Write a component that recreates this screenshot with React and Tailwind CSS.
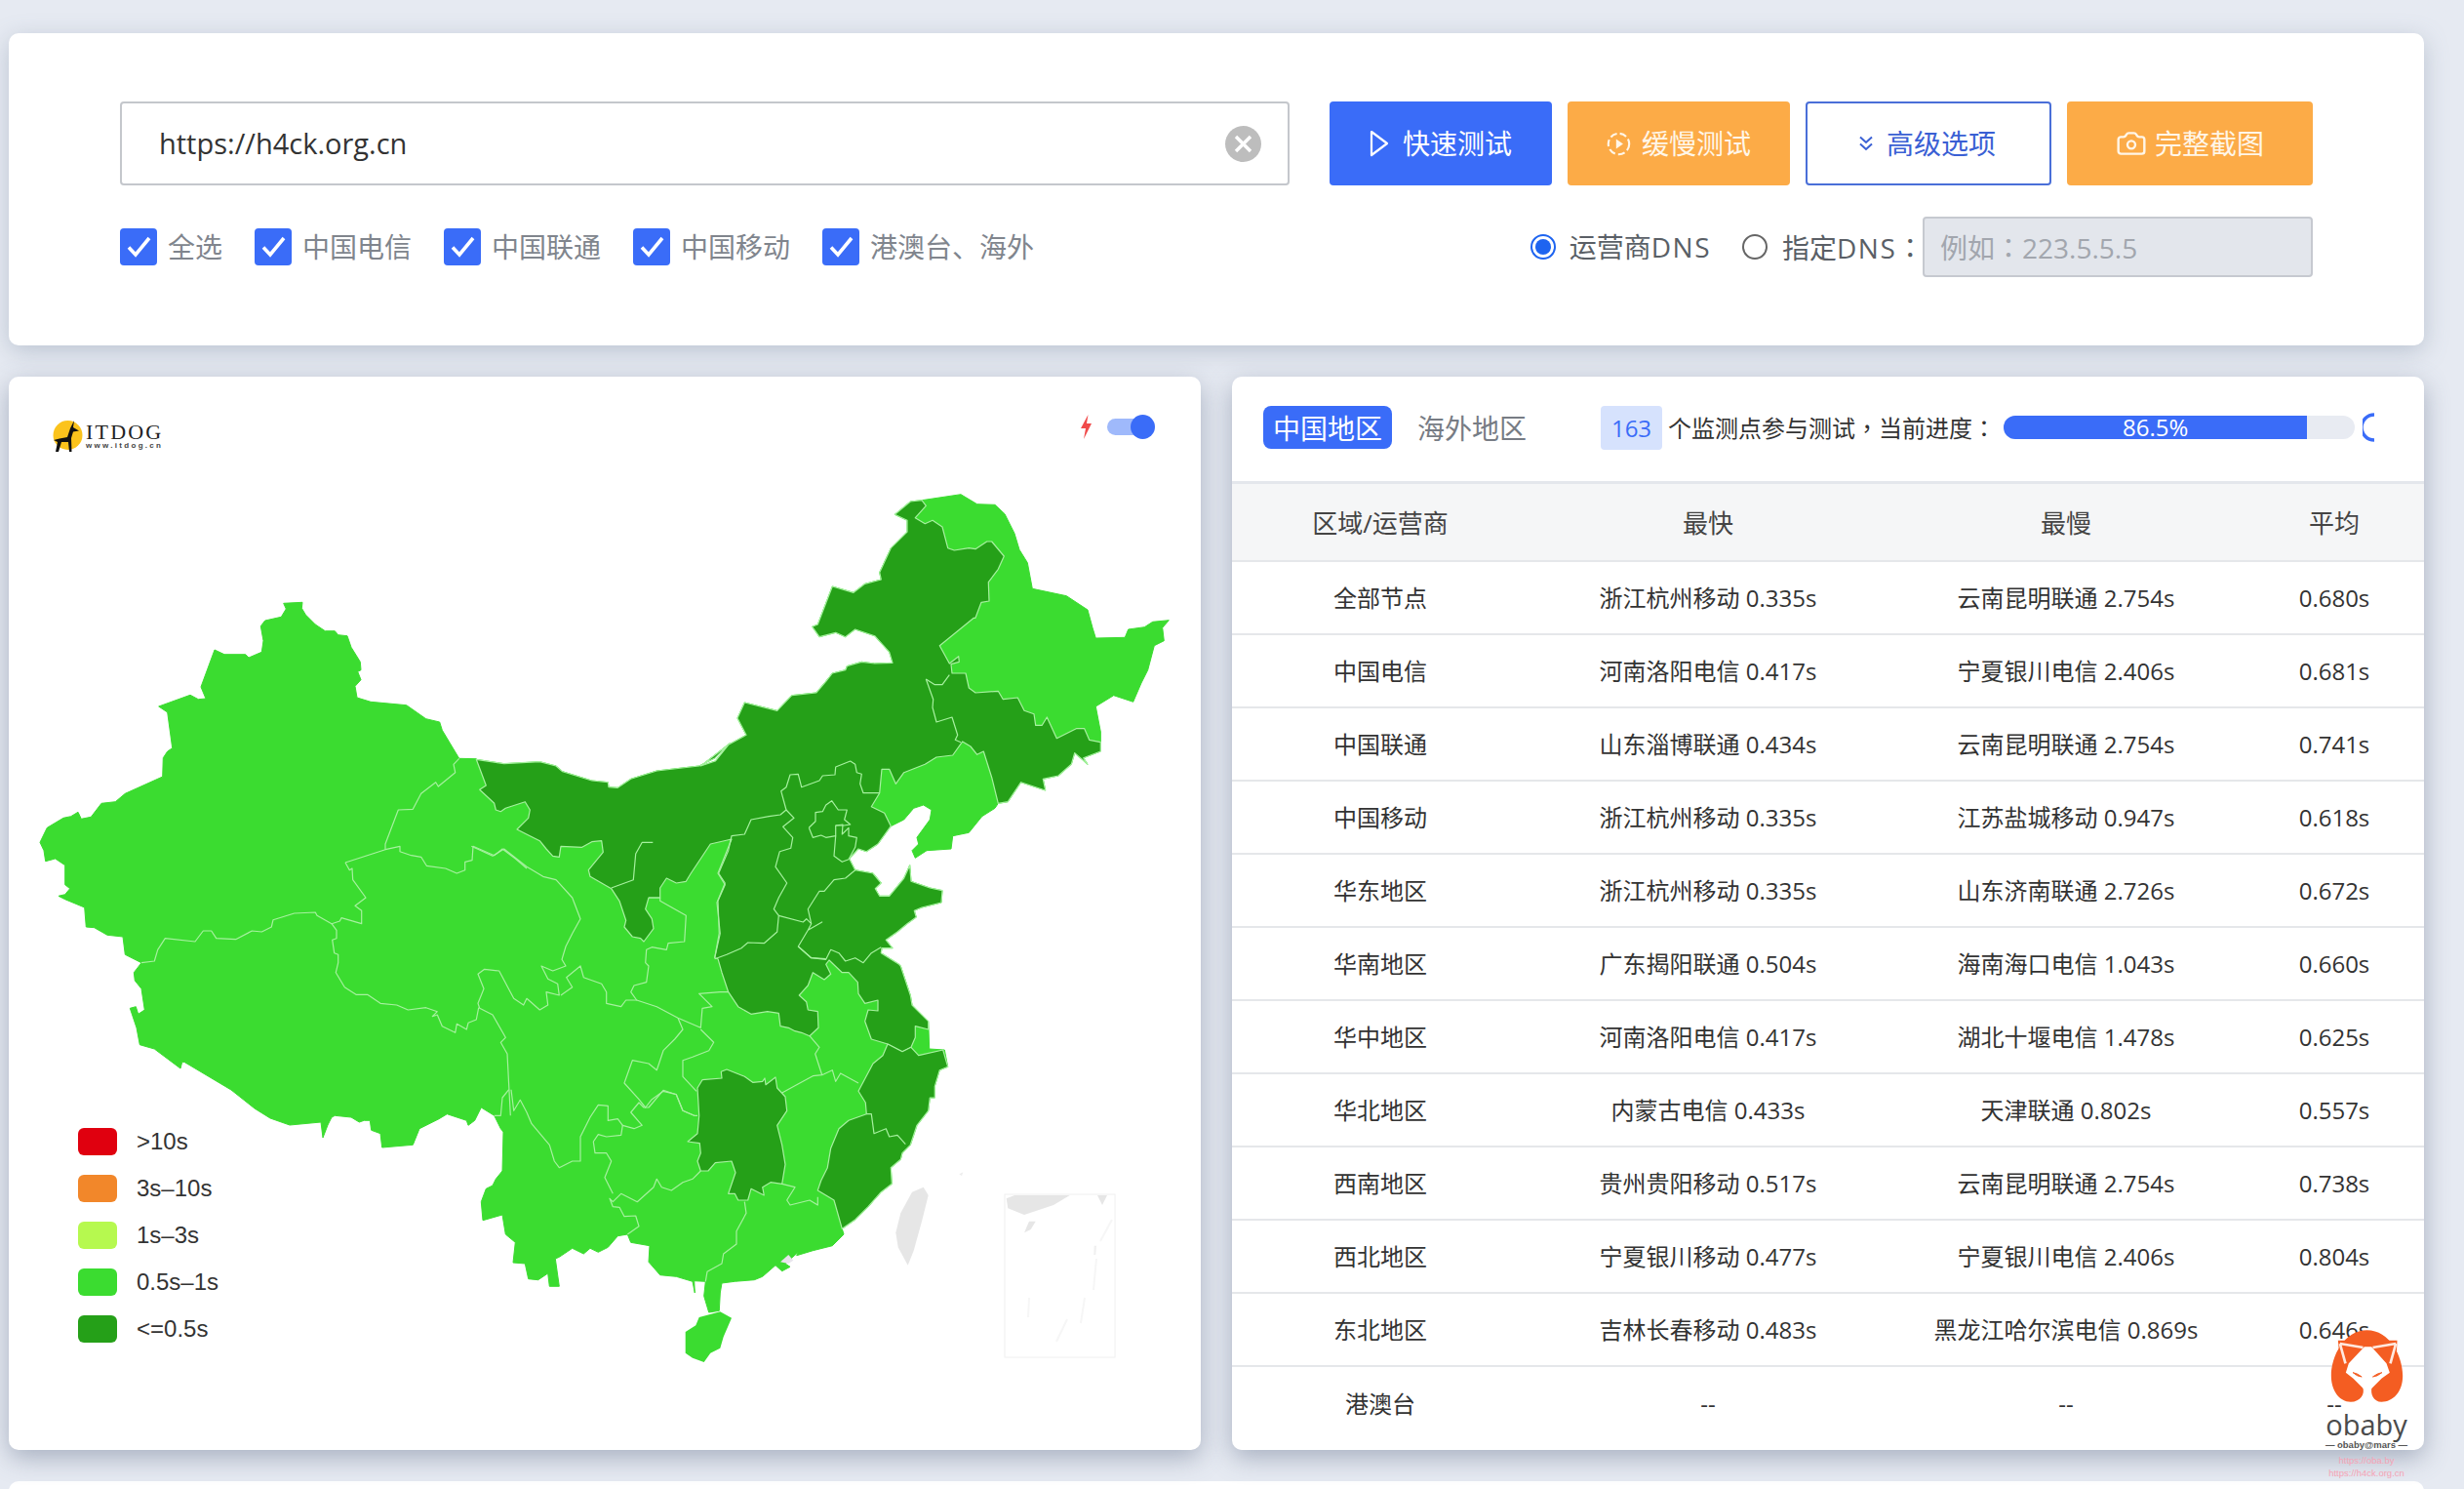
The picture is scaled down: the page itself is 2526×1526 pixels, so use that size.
import React from "react";
import { Camera } from "lucide-react";

const seg = (ox, oy, s) =>
  s.trim().split(/\s+/).map((t) => {
    const [x, y] = t.split(",").map(Number);
    return [ox + x / 3, oy + y / 3];
  });
const A = (s) => seg(30, 600, s);
const B = (s) => seg(340, 760, s);
const C = (s) => seg(700, 490, s);
const D = (s) => seg(650, 780, s);
const E = (s) => seg(480, 1000, s);
const R = (s) => seg(0, 0, s).map(([x, y]) => [x * 3, y * 3]);
const poly = (...segs) => segs.flat().map(([x, y]) => `${x.toFixed(1)},${y.toFixed(1)}`).join(" ");

const northIM = B("445,55 530,68 640,62 690,75 710,92 800,120 850,125 852,140 880,142 920,115 1000,90 1130,75 1180,50 1225,5");
const northNE = C("55,885 100,870 140,820 195,790 168,738 190,690 290,715 335,668 410,660 440,625 460,600 500,590 505,578 550,565 590,570 645,568 635,535 590,485 530,465 500,488 470,475 420,488 398,457 415,450 460,333 525,352 560,325 610,312 605,290 640,215 690,165 690,130 652,112 700,72 735,68");
const ljCoast = C("1285,840 1232,860 1245,880 1205,845 1195,880 1155,915 1108,925 1115,960 1040,935 1000,995 970,1000");
const bohai = C("640,1070 600,1125 565,1148 540,1140 512,1170 530,1205 585,1215 610,1245 592,1262 605,1285 635,1285 680,1230 698,1190 702,1240 760,1260 798,1268 795,1305 735,1320 712,1330 718,1350 690,1370 660,1395 625,1420 645,1445 612,1445 610,1460 665,1495");

const silhouette = poly(
  A("33,790 55,745 105,715 128,710 150,697 160,718 190,712 222,670 265,665 295,640 410,588 412,530 425,510 440,500 425,390 398,372 495,337 520,350 543,348 528,312 570,198 600,212 665,212 675,222 715,205 720,170 712,125 725,108 775,97 790,72 782,55 840,52 838,70 850,90 880,120 910,140 940,140 950,152 978,155 990,190 1018,235 1020,260 1010,265 1020,290 1002,310 1008,345 1050,358 1160,368 1220,410 1262,420 1270,445 1300,495 1322,532 1375,533"),
  northIM,
  northNE,
  C("855,50 905,80 960,82 990,110 1020,170 1035,220 1060,260 1075,340 1180,362 1245,405 1260,460 1270,492 1360,490 1370,465 1420,458 1445,442 1495,437 1475,460 1480,500 1450,515 1430,590 1410,630 1385,688 1325,668 1270,702 1285,780"),
  ljCoast,
  C("960,1015 920,1040 880,1090 830,1100 825,1140 750,1145 715,1168 705,1145 725,1125 720,1105 760,1050 765,1020 740,1005 710,1015 680,1050"),
  bohai,
  D("820,630 850,720 855,750 905,800 908,885 955,888 965,940 940,950 925,1000 925,1035 910,1035 905,1075 870,1120 860,1150 850,1180 825,1205 820,1225 790,1250 793,1300 760,1325 720,1370 680,1410 640,1438 645,1455 610,1490 550,1505 500,1520"),
  E("1015,850 975,885 990,895 965,908 945,890 905,925 880,935 820,940 780,945 775,975 772,1030 740,1035 725,985 730,940 695,938 697,975 690,940 640,925 590,920 555,880 558,830 500,820 490,795 460,800 430,835 400,850 375,838 355,855 320,838 280,865 268,870 280,955 250,955 245,915 215,935 185,932 175,885 138,882 145,820 115,795 105,735 45,752 40,695 55,655 75,645 85,625 105,600 108,480 100,470 80,430 40,405 20,445 0,460"),
  B("415,1165 355,1145 330,1160 270,1190 250,1240 155,1248 150,1205 122,1195 118,1165 100,1165 85,1170 60,1155 10,1150 0,1155"),
  R("336,1153 331,1166 329,1150 297,1153 277,1146 261,1136 237,1117 190,1089"),
  A("520,1470 470,1465 465,1485 385,1425 340,1412 330,1360 310,1300 328,1295 335,1318 355,1305 345,1240 325,1215 322,1190 345,1160 295,1135 288,1080 240,1075 200,1052 175,1050 170,990 110,965 90,955 110,950 125,932 110,920 110,860 80,840 50,848 45,815")
);

const hainan = poly(E("710,1050 775,1033 810,1052 785,1110 775,1145 745,1160 725,1188 690,1175 668,1160 668,1095 700,1075"));

const darkNorth = poly(
  northIM,
  northNE,
  C("748,85 715,122 745,140 768,130 798,150 815,215 835,222 880,215 900,218 935,195 950,195 988,240 970,280 940,320 942,378 918,382 900,430 895,430 790,515 820,570 848,548 850,565 825,572 828,600 870,600 880,645 900,660 970,655 985,680 1030,675 1050,715 1080,725 1085,760 1105,760 1120,735 1150,800 1210,770 1235,770 1250,805 1285,812"),
  ljCoast,
  C("950,920 925,840 905,850 885,825 860,810 830,852 780,858 745,880 680,905 655,940 635,895 612,895 605,968 580,1010 620,1030"),
  bohai,
  D("820,630 850,720 855,750 905,800 905,825 865,815 865,850 852,880 825,893 780,870 730,855 710,800 720,765 750,768 750,735 710,745 690,715 688,680 660,650 640,650 600,612 590,625 605,655 585,672 550,650 535,690 508,720 530,740 535,765 565,770 567,820 540,845 515,835 495,830 475,820 450,815 445,775 410,770 360,778 320,755 290,710 270,650 258,608 248,605 262,530 258,430 280,380 258,345 300,240"),
  B("1165,315 1105,405 1090,430 1060,435 1030,420 1010,450 1010,480 975,480 965,515 985,545 990,575 960,615 950,605 925,600 900,570 905,550 885,490 860,452 795,415 790,395 835,340 830,305 800,308 770,325 705,322 700,355 680,352 660,330 640,305 610,290 570,270 605,235 610,210 595,185 535,205 520,215 505,210 500,190 455,148 475,135")
);

const hunan = poly(E("705,345 720,320 780,315 778,295 795,288 850,310 875,328 905,325 912,315 915,335 945,312 950,345 975,372 980,415 950,460 965,520 975,580 965,640 930,635 905,650 910,675 870,655 860,690 830,690 820,670 800,670 822,605 810,570 760,575 738,600 715,600 705,570 715,545 712,515 675,510 705,485 710,430"));

const zjfj = poly(D("780,870 825,893 852,880 875,905 950,888 965,940 940,950 925,1000 925,1035 910,1035 905,1075 870,1120 860,1150 850,1180 825,1205 820,1225 790,1250 793,1300 760,1325 720,1370 680,1410 640,1438 615,1350 590,1335 565,1320 575,1290 595,1250 605,1190 630,1130 660,1105 715,1085 712,1050 690,1015 735,930 765,905"));

const lines = [
  D("715,1085 730,1085 738,1145 775,1130 785,1155 810,1150 835,1178"),
  C("748,618 775,635 798,635 820,605"),
  C("748,618 770,680 768,705 780,750 828,735 845,790 838,805 855,812"),
  C("605,968 555,968 545,940 550,910 535,905 530,880 515,870 470,888 468,912 430,915 420,930 365,950 355,910 330,912 318,950 302,962 318,1020 300,1035 265,1040 210,1050 190,1095 150,1100 140,1145 110,1215 130,1245 105,1305 115,1400 98,1475"),
  C("318,1020 342,1045 308,1072 338,1105 332,1138 298,1148 285,1195 320,1245 295,1290 280,1325 295,1345 290,1395 250,1430 200,1428 180,1445 135,1465 98,1478"),
  C("295,1345 370,1365 380,1355 395,1370"),
  C("530,1205 500,1230 465,1235 435,1270 420,1270 385,1325 395,1370 385,1390 428,1365 385,1390 355,1440 395,1475 440,1478"),
  D("505,570 545,605 590,610 605,580 630,590 650,615 680,605 705,620 730,590 760,572"),
  C("388,1075 408,1055 408,1028 430,1025 440,1005 458,992 478,1020 505,1020 497,1050 515,1065 495,1068 470,1068 470,1100 440,1105 425,1098 400,1105 388,1075"),
  C("470,1068 492,1065 490,1095 510,1075 510,1100 535,1105 530,1135 510,1172 490,1180 465,1162 470,1100"),
  B("988,310 955,310 935,345 928,425 860,450"),
  A("1322,532 1305,550 1310,575 1258,618 1250,605 1205,640 1180,688 1135,690 1095,795 1095,812"),
  A("972,852 1095,812 1140,802 1140,818 1175,830 1205,835 1222,862 1280,870 1315,885 1340,875 1340,850 1362,845 1365,802 1430,830 1455,810 1495,840 1530,870"),
  A("972,852 985,875 993,870 995,905 1035,960 1002,985 1022,1000 1022,1040 960,1022 955,1032 930,1040 885,1015 880,1005 815,1008 750,1028 745,1050 715,1065 685,1062 635,1088 575,1085 560,1062 535,1062 510,1095 418,1085 395,1120 385,1155 345,1160"),
  A("930,1040 945,1060 945,1085 932,1090 938,1130 950,1135 950,1160 943,1190 970,1235 1005,1258 1040,1258 1080,1285 1130,1290 1165,1305 1220,1298 1255,1310 1240,1325 1255,1320 1270,1355 1310,1375 1315,1348 1345,1365 1350,1345 1375,1335 1382,1298"),
  B("430,322 495,352 530,330 600,385 650,415 690,425 740,480 765,545 740,590 720,630 708,670 720,690 680,705 645,690 665,730 695,745 700,780 660,770 665,810 640,825 600,790 590,810 560,790 515,705 470,700 450,715 468,760 450,805 455,820 495,840 535,910 520,925 540,960 550,1150"),
  B("705,780 740,755 722,725 765,690 775,725 830,745 845,770 845,805 890,815 905,795 940,795"),
  B("975,480 1010,480 1010,490 1090,535 1085,615 1035,620 1030,640 985,632 968,640 965,680 975,690 968,740 930,750 920,770 938,795 1000,815 1065,850 1135,880 1140,820 1170,815 1130,775 1195,770 1220,770"),
  B("1065,850 1080,885 1055,915 1020,950 1000,1010 975,990 925,980 900,1050 945,1100 965,1125 985,1100 1020,1075 1060,1085 1080,1135 1115,1150"),
  B("1135,885 1175,925 1160,950 1110,970 1080,980 1080,1030 1122,1075"),
  D("540,845 570,880 557,900 578,965 550,968 500,995 455,1020"),
  D("578,965 610,950 620,985 635,960 690,990"),
  E("965,640 1005,650 980,690 990,705 1050,690 1075,705 1075,680"),
  E("850,695 855,730 825,785 825,825 785,855 780,885 735,910 730,940"),
  E("715,600 690,625 660,635 625,660 595,650 580,625 570,650 520,695 470,670 445,695 435,685 445,710 465,712 480,740 515,738 525,770 490,795"),
  E("445,670 420,620 440,570 425,545 390,545 385,510 400,488 425,495 470,490 475,460 510,470 535,460 500,420 525,390 540,405 555,405 600,352 640,365 660,415 695,430 705,430"),
  E("475,460 460,440 430,445 430,400 400,397 375,435 345,495 345,570 320,570 280,590 265,570 250,520 195,455 180,420 160,382 140,415 132,350"),
  E("125,350 105,375 100,430 80,430"),
].map((s) => poly(s));

const LIGHT = "#3bdc30";
const DARK = "#25a018";
const EDGE = "#a6f19f";

function ChinaMap() {
  return (
    <svg viewBox="9 386 1222 1100" className="block w-full h-full">
      <polygon points={silhouette} fill={LIGHT} stroke={LIGHT} strokeWidth="1" strokeLinejoin="round" />
      <polygon points={hainan} fill={LIGHT} />
      <polygon points={darkNorth} fill={DARK} stroke={EDGE} strokeWidth="1.2" strokeLinejoin="round" />
      <polygon points={hunan} fill={DARK} stroke={EDGE} strokeWidth="1.2" strokeLinejoin="round" />
      <polygon points={zjfj} fill={DARK} stroke={EDGE} strokeWidth="1.2" strokeLinejoin="round" />
      {lines.map((pts, i) => (
        <polyline key={i} points={pts} fill="none" stroke={EDGE} strokeWidth="1.2" strokeLinejoin="round" />
      ))}
      <polygon points={poly(E("1400,650 1415,675 1395,755 1370,845 1352,890 1322,835 1315,790 1330,730 1365,665"))} fill="#e6e6e6" />
      <polygon points={poly(E("1510,610 1522,604 1518,616"))} fill="#eeeeee" />
      <polygon points={poly(E("960,880 985,858 1000,875 985,885"))} fill="#e8e4ec" />
      <rect x="1030" y="1224" width="113" height="167" fill="#ffffff" stroke="#f0f0f0" strokeWidth="1" />
      <polygon points={poly(D("1145,1345 1170,1335 1340,1335 1290,1365 1200,1395 1150,1375"))} fill="#e6e6e6" />
      <polygon points={poly(D("1425,1335 1455,1335 1440,1365"))} fill="#e6e6e6" />
      <polygon points={poly(D("1215,1415 1235,1415 1220,1440 1200,1450"))} fill="#e6e6e6" />
      <polygon points={poly(D("1415,1490 1422,1490 1420,1518 1414,1518"))} fill="#f0f0f0" />
      <path d="M1140 1250 L1128 1272 M1124 1290 L1121 1322 M1112 1330 L1108 1356 M1094 1352 L1083 1375 M1055 1330 L1054 1350" stroke="#f6f6f6" strokeWidth="2" fill="none" />
    </svg>
  );
}

function Logo() {
  return (
    <div className="absolute left-[44px] top-[44px] flex items-center gap-[2px]">
      <svg viewBox="0 0 33 33" className="w-[33px] h-[33px] shrink-0">
        <circle cx="16.5" cy="16" r="15" fill="#fbc31c" />
        <path d="M23 1 L22 8 L28 11.5 L22 12.5 L20 19 L20.5 33 L18 33 L17 23 L10 23 L7 33 L4 33 L6 23 L2 21 L8 19.5 L16 18 L19 9 Z" fill="#111111" />
      </svg>
      <div className="flex flex-col text-[#222]">
        <span className="text-[22px] leading-[19px] tracking-[2.2px] [font-family:'Liberation_Serif',serif]">ITDOG</span>
        <span className="text-[8px] leading-[9px] tracking-[2.3px] font-bold text-[#444] [font-family:'Liberation_Sans',sans-serif]">www.itdog.cn</span>
      </div>
    </div>
  );
}

function Toggle() {
  return (
    <div className="absolute left-[1098px] top-[39px] flex items-center gap-[15px]">
      <svg viewBox="0 0 13 25" className="w-[13px] h-[25px]">
        <path d="M8.5 0 L1 14 L6 14 L4 25 L12 9 L7 9 Z" fill="#f04b4b" />
      </svg>
      <div className="relative w-[47px] h-[17px] rounded-full bg-[#9fb9fb]">
        <div className="absolute right-[-2px] top-[-4px] w-[25px] h-[25px] rounded-full bg-[#3a6cf8]" />
      </div>
    </div>
  );
}

const legend = [
  ["bg-[#e0000f]", ">10s"],
  ["bg-[#f2872a]", "3s–10s"],
  ["bg-[#b6f94f]", "1s–3s"],
  ["bg-[#3bdc30]", "0.5s–1s"],
  ["bg-[#25a018]", "<=0.5s"],
];

function Legend() {
  return (
    <div className="absolute left-[71px] top-[770px] flex flex-col gap-[20px]">
      {legend.map(([c, t]) => (
        <div key={t} className="flex items-center gap-[20px] h-[28px]">
          <div className={`w-[40px] h-[28px] rounded-[6px] ${c}`} />
          <span className="text-[24px] text-[#333] [font-family:'Liberation_Sans',sans-serif]">{t}</span>
        </div>
      ))}
    </div>
  );
}

function Pn({ children }) {
  return <span className="[font-family:'Noto_Sans_CJK_TC',sans-serif]">{children}</span>;
}

function Check({ label }) {
  return (
    <div className="flex items-center gap-[11px]">
      <div className="w-[38px] h-[38px] rounded-[4px] bg-[#3a6cf8] flex items-center justify-center shrink-0">
        <svg viewBox="0 0 38 38" className="w-[38px] h-[38px]">
          <path d="M9 19.5 L16 27 L30 10" stroke="#fff" strokeWidth="3.6" fill="none" />
        </svg>
      </div>
      <span className="text-[28px] leading-[38px] text-[#80858d]">{label}</span>
    </div>
  );
}

function Btn({ className, children }) {
  return (
    <div className={`h-[86px] rounded-[4px] flex items-center justify-center text-[28px] ${className}`}>
      {children}
    </div>
  );
}

const rows = [
  ["全部节点", "浙江杭州移动 0.335s", "云南昆明联通 2.754s", "0.680s"],
  ["中国电信", "河南洛阳电信 0.417s", "宁夏银川电信 2.406s", "0.681s"],
  ["中国联通", "山东淄博联通 0.434s", "云南昆明联通 2.754s", "0.741s"],
  ["中国移动", "浙江杭州移动 0.335s", "江苏盐城移动 0.947s", "0.618s"],
  ["华东地区", "浙江杭州移动 0.335s", "山东济南联通 2.726s", "0.672s"],
  ["华南地区", "广东揭阳联通 0.504s", "海南海口电信 1.043s", "0.660s"],
  ["华中地区", "河南洛阳电信 0.417s", "湖北十堰电信 1.478s", "0.625s"],
  ["华北地区", "内蒙古电信 0.433s", "天津联通 0.802s", "0.557s"],
  ["西南地区", "贵州贵阳移动 0.517s", "云南昆明联通 2.754s", "0.738s"],
  ["西北地区", "宁夏银川移动 0.477s", "宁夏银川电信 2.406s", "0.804s"],
  ["东北地区", "吉林长春移动 0.483s", "黑龙江哈尔滨电信 0.869s", "0.646s"],
  ["港澳台", "--", "--", "--"],
];

function Watermark() {
  return (
    <div className="absolute left-[1118px] top-[974px] w-[90px] flex flex-col items-center [font-family:'Liberation_Sans',sans-serif]">
      <svg viewBox="400 180 260 240" className="w-[87px] h-[80px]">
        <path d="M530 190 C600 190 640 270 640 330 C640 380 610 410 575 410 C550 410 540 385 545 365 C555 350 530 350 517 365 C525 385 510 410 480 410 C445 410 420 375 420 330 C420 270 460 190 530 190Z" fill="#f45d22" />
        <path d="M441 221 L475 221 L445 262Z M623 221 L590 221 L621 262Z" fill="#f45d22" />
        <path d="M447 231 L518 243 M447 231 L464 292 M619 231 L548 243 M619 231 L602 292" stroke="#ffe9df" strokeWidth="8" fill="none" />
        <path d="M522 241 L544 241 L590 292 L600 320 L575 338 L545 368 L518 368 L488 338 L465 320 L474 292Z" fill="#ffffff" />
        <path d="M487 320 Q500 332 514 333 Q500 322 487 320Z M576 320 Q562 332 548 333 Q562 322 576 320Z" fill="#f45d22" stroke="#f45d22" strokeWidth="3" />
      </svg>
      <div className="text-[29px] leading-[30px] mt-[5px] text-[#4b4b4b] [font-family:'Open_Sans',sans-serif]">obaby</div>
      <div className="text-[9.5px] leading-[11px] whitespace-nowrap font-bold text-[#555]">— obaby@mars —</div>
      <div className="text-[9.5px] leading-[13px] mt-[4px] whitespace-nowrap text-[#f5a3b5]">https://oba.by</div>
      <div className="text-[9.5px] leading-[13px] whitespace-nowrap text-[#f5a3b5]">https://h4ck.org.cn</div>
    </div>
  );
}

export default function App() {
  return (
    <div className="h-[1526px] w-[2526px] overflow-hidden bg-[#e6eaf2] pt-[34px] pl-[9px] pr-[41px] text-[#333] [font-family:'Open_Sans','Noto_Sans_CJK_SC',sans-serif]">
      <div className="h-[320px] bg-white rounded-[10px] shadow-[0_6px_24px_rgba(110,125,150,0.35)] pt-[70px] px-[114px] flex flex-col gap-[32px]">
        <div className="flex items-center">
          <div className="w-[1199px] h-[86px] rounded-[4px] border-2 border-[#c4c7cc] flex items-center justify-between pl-[38px] pr-[27px]">
            <span className="text-[29px] text-[#333]">https://h4ck.org.cn</span>
            <svg viewBox="0 0 37 37" className="w-[37px] h-[37px]">
              <circle cx="18.5" cy="18.5" r="18.5" fill="#bdbdbd" />
              <path d="M11 11 L26 26 M26 11 L11 26" stroke="#fff" strokeWidth="3.4" />
            </svg>
          </div>
          <div className="ml-[41px] flex gap-[16px]">
            <Btn className="w-[228px] bg-[#3a6cf8] text-white gap-[14px]">
              <svg viewBox="0 0 20 28" className="w-[20px] h-[28px]">
                <path d="M2 2 L18 14 L2 26 Z" fill="none" stroke="#fff" strokeWidth="2.2" strokeLinejoin="round" />
              </svg>
              <span>快速测试</span>
            </Btn>
            <Btn className="w-[228px] bg-[#fcab47] text-[#fff6e8] gap-[11px]">
              <svg viewBox="0 0 28 28" className="w-[25px] h-[25px]">
                <circle cx="14" cy="14" r="12" fill="none" stroke="#fff6e8" strokeWidth="2.4" strokeDasharray="8 3.5" />
                <path d="M11 8.5 L19 14 L11 19.5 Z" fill="#fff6e8" />
              </svg>
              <span>缓慢测试</span>
            </Btn>
            <Btn className="w-[252px] bg-white border-2 border-[#4a6fd8] text-[#3a60d4] gap-[13px] pr-[3px]">
              <svg viewBox="0 0 16 16" className="w-[16px] h-[16px]">
                <path d="M2 1.5 L8 7 L14 1.5 M2 8.5 L8 14 L14 8.5" fill="none" stroke="currentColor" strokeWidth="2" />
              </svg>
              <span>高级选项</span>
            </Btn>
            <Btn className="w-[252px] bg-[#fcab47] text-[#fff6e8] gap-[8px]">
              <Camera size={32} strokeWidth={1.8} />
              <span>完整截图</span>
            </Btn>
          </div>
        </div>
        <div className="flex items-center justify-between h-[62px]">
          <div className="flex items-center gap-[33px]">
            <Check label="全选" />
            <Check label="中国电信" />
            <Check label="中国联通" />
            <Check label="中国移动" />
            <Check label="港澳台、海外" />
          </div>
          <div className="flex items-center">
            <div className="w-[26px] h-[26px] rounded-full border-2 border-[#1e64f0] flex items-center justify-center">
              <div className="w-[16px] h-[16px] rounded-full bg-[#1e64f0]" />
            </div>
            <span className="ml-[14px] text-[28px] text-[#5a5f66]">运营商<span className="tracking-[1.5px]">DNS</span></span>
            <div className="ml-[32px] w-[26px] h-[26px] rounded-full border-2 border-[#666]" />
            <span className="ml-[15px] text-[28px] text-[#5a5f66] w-[144px] whitespace-nowrap">指定<span className="tracking-[1.5px]">DNS</span><Pn>：</Pn></span>
            <div className="w-[400px] h-[62px] rounded-[4px] border-2 border-[#c6c9d0] bg-[#e3e6ec] flex items-center pl-[16px] text-[28px] text-[#a2a6ae]">
              <span>例如<Pn>：</Pn>223.5.5.5</span>
            </div>
          </div>
        </div>
      </div>

      <div className="mt-[32px] grid grid-cols-[1222px_1222px] gap-[32px]">
        <div className="relative h-[1100px] bg-white rounded-[10px] shadow-[0_8px_26px_rgba(90,105,130,0.45)]">
          <ChinaMap />
          <Logo />
          <Toggle />
          <Legend />
        </div>
        <div className="relative h-[1100px] bg-white rounded-[10px] shadow-[0_8px_26px_rgba(90,105,130,0.45)] flex flex-col overflow-visible">
          <div className="h-[110px] shrink-0 flex items-center pl-[32px] pb-[3px] border-b-[3px] border-[#e4e7ec]">
            <div className="w-[132px] h-[44px] rounded-[8px] bg-[#3a6cf8] text-white text-[28px] leading-[46px] text-center overflow-visible">中国地区</div>
            <div className="ml-[26px] w-[112px] pt-[2px] text-[28px] text-[#777c84] whitespace-nowrap">海外地区</div>
            <div className="ml-[76px] w-[63px] h-[45px] rounded-[4px] bg-[#d6e2fd] text-[#3a6cf8] text-[24px] leading-[45px] text-center">163</div>
            <div className="ml-[6px] w-[344px] pt-[1px] text-[24px] text-[#333] whitespace-nowrap">个监测点参与测试<Pn>，</Pn>当前进度<Pn>：</Pn></div>
            <div className="w-[360px] h-[24px] rounded-[12px] bg-[#e8ebf2] overflow-hidden">
              <div className="w-[86.5%] h-full bg-[#3a6cf8] text-white text-[24px] leading-[24px] text-center">86.5%</div>
            </div>
            <svg viewBox="0 0 14 30" className="ml-[8px] w-[14px] h-[30px]">
              <path d="M12 2 A13 13 0 0 0 12 28" fill="none" stroke="#3a6cf8" strokeWidth="3.5" />
            </svg>
          </div>
          <div className="grid grid-cols-[304px_368px_366px_184px] h-[80px] shrink-0 items-center text-center bg-[#f5f6f7] border-b-2 border-[#e5e7ea] pt-[2px] text-[26px] text-[#444]">
            <div>区域/运营商</div>
            <div>最快</div>
            <div>最慢</div>
            <div>平均</div>
          </div>
          {rows.map((r, i) => (
            <div
              key={r[0]}
              className={`grid grid-cols-[304px_368px_366px_184px] h-[75px] shrink-0 items-center text-center text-[24px] text-[#333] ${i < rows.length - 1 ? "border-b-2 border-[#e5e7ea]" : ""}`}
            >
              {r.map((c, j) => (
                <div key={j} className="whitespace-nowrap">{c}</div>
              ))}
            </div>
          ))}
          <Watermark />
        </div>
      </div>

      <div className="mt-[32px] h-[60px] bg-white rounded-[10px]" />
    </div>
  );
}
